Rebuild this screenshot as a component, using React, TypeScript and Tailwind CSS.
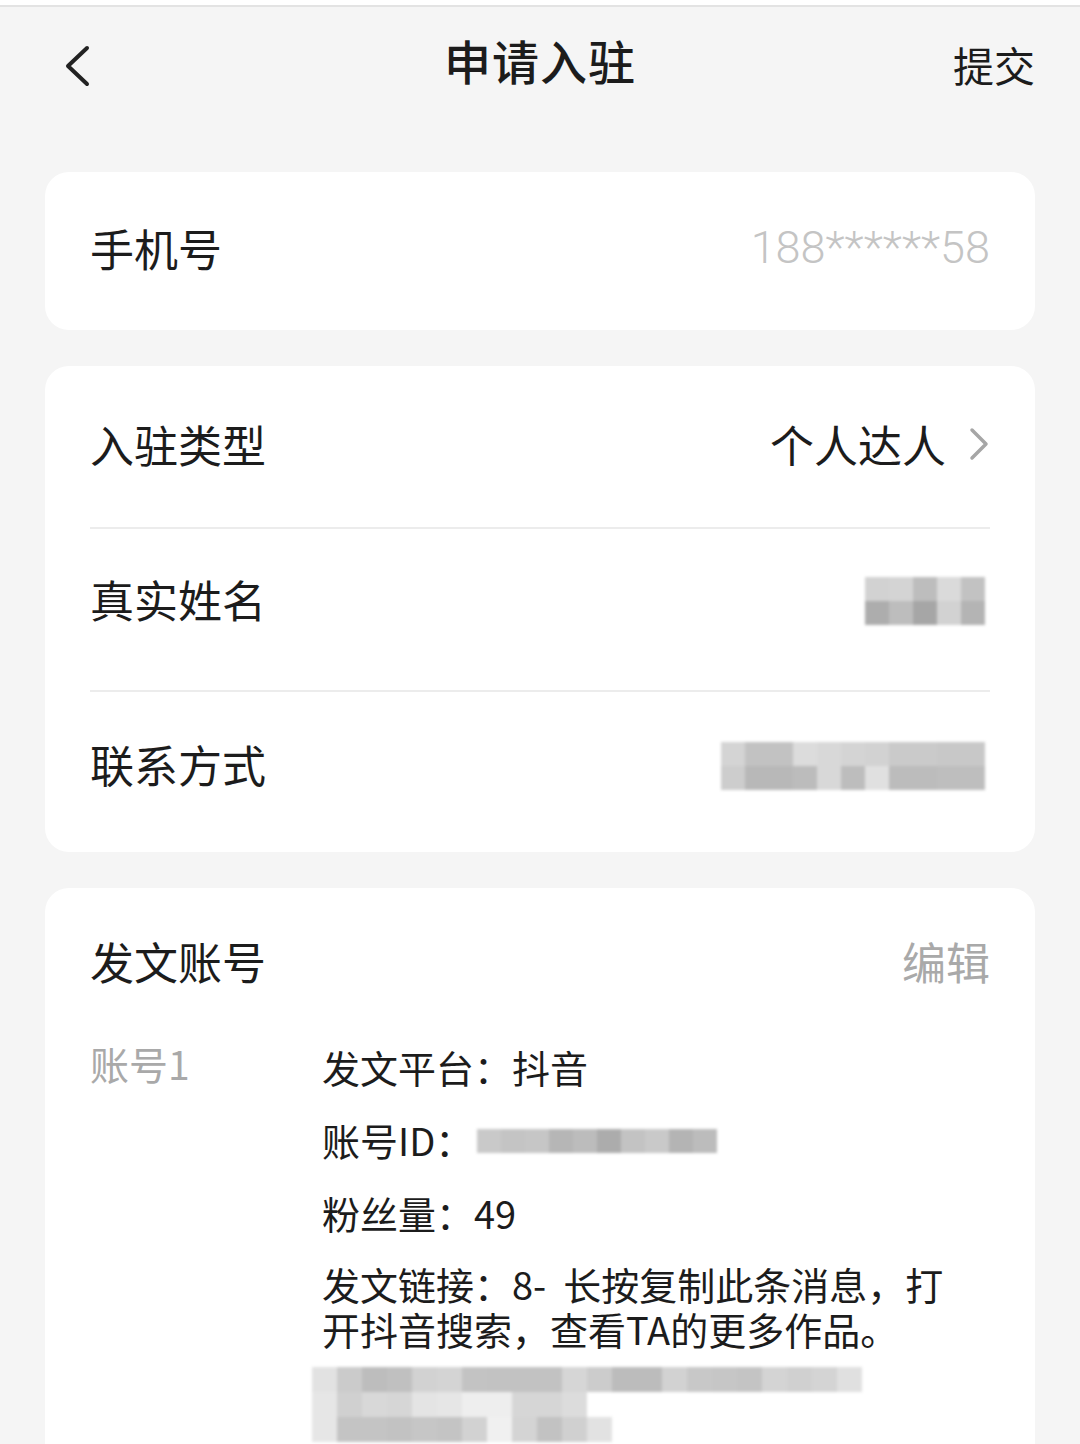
import React from "react";

const FONT = { fontFamily: '"Noto Sans CJK SC", "Noto Sans", sans-serif' };

type Cell = string;

function Mosaic({ rows, cell = 24, className = "" }: { rows: Cell[][]; cell?: number; className?: string }) {
  return (
    <div className={`flex flex-col blur-[1.5px] ${className}`}>
      {rows.map((r, i) => (
        <div key={i} className="flex">
          {r.map((c, j) => (
            <div key={j} style={{ width: cell, height: cell, background: c }} />
          ))}
        </div>
      ))}
    </div>
  );
}

function Divider() {
  return <div className="mx-[45px] h-[2px] bg-[#ececec]" />;
}

export default function App() {
  return (
    <div className="min-h-[1444px] w-[1080px] bg-[#f5f5f5] text-[#1c1c1c]" style={FONT}>
      {/* top status edge */}
      <div className="h-[5px] bg-white" />
      <div className="h-[2px] bg-[#e3e3e3]" />

      {/* header */}
      <div className="relative flex h-[115px] items-center justify-between px-[45px]">
        <svg width="40" height="44" viewBox="0 0 40 44" className="ml-[18px] mt-[4px]">
          <polyline points="24,3 5,21 24,39" fill="none" stroke="#222" strokeWidth="4" strokeLinecap="round" strokeLinejoin="round" />
        </svg>
        <div className="absolute left-0 right-0 top-[23px] text-center text-[47px] font-medium leading-[60px] tracking-[1px]">
          申请入驻
        </div>
        <div className="-mt-[2px] text-[41px] leading-[56px]">提交</div>
      </div>

      <div className="flex flex-col gap-[36px] px-[45px] pt-[50px]">
        {/* card 1 */}
        <div className="flex h-[158px] items-center justify-between rounded-[24px] bg-white px-[45px] pb-[6px]">
          <span className="text-[44px] leading-[56px]">手机号</span>
          <span className="text-[45px] leading-[56px] text-[#c4c4c4]" style={{ fontFamily: 'Roboto, "Noto Sans", sans-serif', fontWeight: 300 }}>
            188******58
          </span>
        </div>

        {/* card 2 */}
        <div className="flex flex-col rounded-[24px] bg-white">
          <div className="flex h-[161px] items-center justify-between px-[45px] pb-[6px]">
            <span className="text-[44px] leading-[56px]">入驻类型</span>
            <div className="flex items-center gap-[22px]">
              <span className="text-[44px] leading-[56px]">个人达人</span>
              <svg width="22" height="36" viewBox="0 0 22 36">
                <polyline points="4,4 18,18 4,32" fill="none" stroke="#a6a6a6" strokeWidth="3.5" strokeLinecap="round" strokeLinejoin="round" />
              </svg>
            </div>
          </div>
          <Divider />
          <div className="flex h-[161px] items-center justify-between px-[45px] pb-[22px]">
            <span className="text-[44px] leading-[56px]">真实姓名</span>
            <Mosaic
              className="mr-[5px] mt-[4px]"
              rows={[
                ["#d2d2d2", "#d4d4d4", "#bdbdbd", "#dadada", "#c2c2c2"],
                ["#adadad", "#bdbdbd", "#a6a6a6", "#d2d2d2", "#b4b4b4"],
              ]}
            />
          </div>
          <Divider />
          <div className="flex h-[160px] items-center justify-between px-[45px] pb-[16px]">
            <span className="text-[44px] leading-[56px]">联系方式</span>
            <Mosaic
              className="mr-[5px] mt-[4px]"
              rows={[
                ["#d4d4d4", "#c2c2c2", "#c2c2c2", "#dcdcdc", "#d8d8d8", "#d4d4d4", "#d2d2d2", "#cacaca", "#cacaca", "#c8c8c8", "#c8c8c8"],
                ["#cdcdcd", "#b8b8b8", "#b8b8b8", "#bcbcbc", "#d8d8d8", "#bdbdbd", "#e0e0e0", "#bcbcbc", "#bcbcbc", "#bebebe", "#bebebe"],
              ]}
            />
          </div>
        </div>

        {/* card 3 */}
        <div className="flex flex-col rounded-t-[24px] bg-white px-[45px] pb-[10px]">
          <div className="flex h-[154px] items-center justify-between pb-[8px]">
            <span className="text-[44px] leading-[56px]">发文账号</span>
            <span className="text-[44px] leading-[56px] text-[#a9a9a9]">编辑</span>
          </div>
          <div className="flex">
            <div className="-mt-[4px] w-[232px] text-[39px] leading-[50px] text-[#a9a9a9]">账号1</div>
            <div className="flex flex-1 flex-col text-[38px] leading-[50px]">
              <div>发文平台：抖音</div>
              <div className="mt-[23px] flex items-center">
                <span>账号ID：</span>
                <Mosaic
                  cell={24}
                  className="ml-[4px] mt-[2px]"
                  rows={[
                    ["#c9c9c9", "#c4c4c4", "#c6c6c6", "#b6b6b6", "#bcbcbc", "#acacac", "#c3c3c3", "#c9c9c9", "#b4b4b4", "#bcbcbc"],
                  ]}
                />
              </div>
              <div className="mt-[23px]">粉丝量：49</div>
              <div className="mt-[23px] flex flex-col">
                <div className="h-[45px] leading-[45px]">发文链接：8-&nbsp;&nbsp;长按复制此条消息，打</div>
                <div className="h-[45px] leading-[45px]">开抖音搜索，查看TA的更多作品。</div>
              </div>
              <div className="relative -ml-[10px] mt-[16px]">
                <Mosaic
                  cell={25}
                  rows={[
                    ["#e2e2e2", "#cbcbcb", "#bdbdbd", "#c0c0c0", "#d2d2d2", "#d4d4d4", "#c3c3c3", "#c2c2c2", "#c2c2c2", "#c2c2c2", "#d6d6d6", "#cccccc", "#bcbcbc", "#bcbcbc", "#d2d2d2", "#c8c8c8", "#c6c6c6", "#c4c4c4", "#d4d4d4", "#d0d0d0", "#d4d4d4", "#e0e0e0"],
                    ["#e6e6e6", "#d0d0d0", "#d8d8d8", "#d6d6d6", "#e4e4e4", "#e6e6e6", "#eeeeee", "#eeeeee", "#d6d6d6", "#d6d6d6", "#dcdcdc"],
                    ["#e6e6e6", "#c4c4c4", "#c4c4c4", "#c2c2c2", "#c6c6c6", "#c4c4c4", "#d2d2d2", "#f0f0f0", "#d4d4d4", "#c2c2c2", "#d0d0d0", "#e2e2e2"],
                  ]}
                />
              </div>
            </div>
          </div>
        </div>
      </div>
    </div>
  );
}
